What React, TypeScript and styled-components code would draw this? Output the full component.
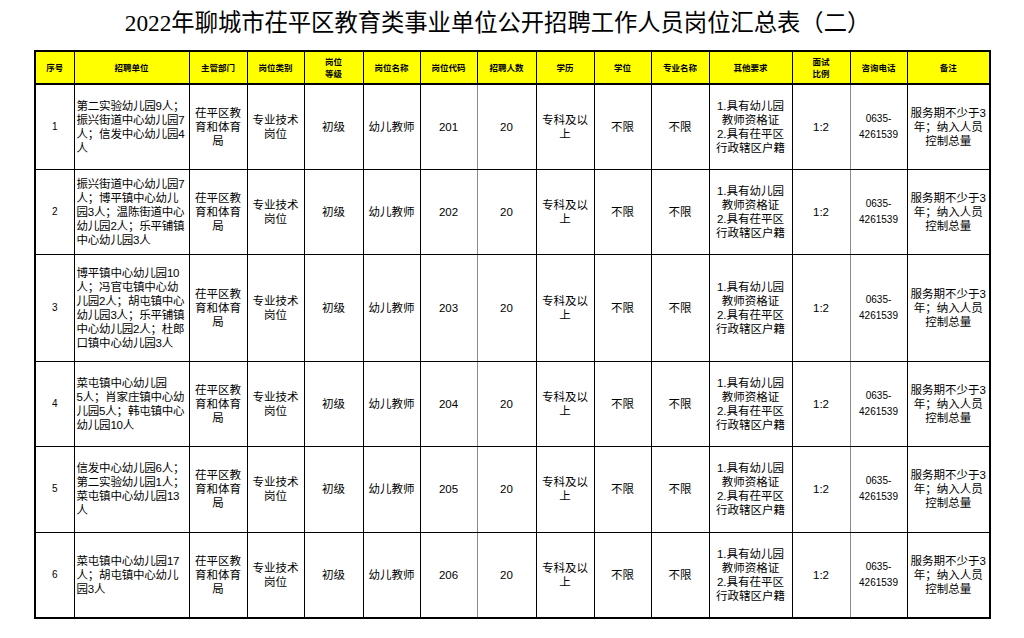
import React, { FC } from 'react';
import styled, { createGlobalStyle } from 'styled-components';

const GlobalStyle = createGlobalStyle`
  html, body {
    margin: 0;
    padding: 0;
    background: #ffffff;
  }
  body {
    font-family: "Liberation Sans", "Noto Sans CJK SC", sans-serif;
    color: #000;
  }
`;

const Page = styled.div`
  width: 1024px;
  height: 638px;
  padding-left: 34px;
  box-sizing: border-box;
`;

const Title = styled.h1`
  width: 957px;
  height: 50px;
  margin: 0;
  padding-right: 30px;
  padding-bottom: 4px;
  box-sizing: border-box;
  display: flex;
  align-items: center;
  justify-content: center;
  font-family: "Liberation Serif", "Noto Sans CJK SC", serif;
  font-weight: 400;
  font-size: 23.3px;
  line-height: 28px;
`;

const Sheet = styled.table`
  width: 957px;
  table-layout: fixed;
  border-collapse: collapse;
  border: 2px solid #000;
`;

const HeadCell = styled.th`
  background: #ffff00;
  height: 31px;
  padding: 0;
  border: 1px solid #000;
  border-bottom: 2px solid #000;
  font-size: 8.5px;
  font-weight: 700;
  line-height: 12px;
  text-align: center;
  vertical-align: middle;
  white-space: nowrap;
`;

const Cell = styled.td<{ $left?: boolean; $small?: boolean; $grey?: boolean }>`
  padding: 0 ${(p) => (p.$left ? '2px' : '0')};
  border: 1px solid #000;
  ${(p) => (p.$grey ? 'border-right-color: #8a8a8a;' : '')}
  font-size: ${(p) => (p.$small ? '10px' : '11.5px')};
  line-height: ${(p) => (p.$small ? '16px' : '14px')};
  text-align: ${(p) => (p.$left ? 'left' : 'center')};
  vertical-align: middle;
  white-space: nowrap;
  overflow: hidden;
  letter-spacing: ${(p) => (p.$left ? '-0.2px' : '0')};
`;

const Line = styled.div`
  white-space: nowrap;
`;

const Lines: FC<{ text: string[] }> = ({ text }) => (
  <>
    {text.map((t, i) => (
      <Line key={i}>{t}</Line>
    ))}
  </>
);

const widths = [39, 115, 58, 57, 59, 57, 57, 59, 58, 57, 58, 83, 58, 57, 83];

const headers: string[][] = [
  ['序号'],
  ['招聘单位'],
  ['主管部门'],
  ['岗位类别'],
  ['岗位', '等级'],
  ['岗位名称'],
  ['岗位代码'],
  ['招聘人数'],
  ['学历'],
  ['学位'],
  ['专业名称'],
  ['其他要求'],
  ['面试', '比例'],
  ['咨询电话'],
  ['备注'],
];

interface IRow {
  no: number;
  height: number;
  units: string[];
  code: string;
}

const rows: IRow[] = [
  {
    no: 1,
    height: 85,
    units: ['第二实验幼儿园9人；', '振兴街道中心幼儿园7', '人；信发中心幼儿园4', '人'],
    code: '201',
  },
  {
    no: 2,
    height: 85,
    units: ['振兴街道中心幼儿园7', '人；博平镇中心幼儿', '园3人；温陈街道中心', '幼儿园2人；乐平铺镇', '中心幼儿园3人'],
    code: '202',
  },
  {
    no: 3,
    height: 107,
    units: [
      '博平镇中心幼儿园10',
      '人；冯官屯镇中心幼',
      '儿园2人；胡屯镇中心',
      '幼儿园3人；乐平铺镇',
      '中心幼儿园2人；杜郎',
      '口镇中心幼儿园3人',
    ],
    code: '203',
  },
  {
    no: 4,
    height: 85,
    units: ['菜屯镇中心幼儿园', '5人；肖家庄镇中心幼', '儿园5人；韩屯镇中心', '幼儿园10人'],
    code: '204',
  },
  {
    no: 5,
    height: 86,
    units: ['信发中心幼儿园6人；', '第二实验幼儿园1人；', '菜屯镇中心幼儿园13', '人'],
    code: '205',
  },
  {
    no: 6,
    height: 86,
    units: ['菜屯镇中心幼儿园17', '人；胡屯镇中心幼儿', '园3人'],
    code: '206',
  },
];

const Row = styled.tr<{ $h: number }>`
  height: ${(p) => p.$h}px;
`;

const App: FC = () => {
  return (
    <>
      <GlobalStyle />
      <Page>
        <Title>2022年聊城市茌平区教育类事业单位公开招聘工作人员岗位汇总表（二）</Title>
        <Sheet>
          <colgroup>
            {widths.map((w, i) => (
              <col key={i} style={{ width: w }} />
            ))}
          </colgroup>
          <thead>
            <tr>
              {headers.map((h, i) => (
                <HeadCell key={i}>
                  <Lines text={h} />
                </HeadCell>
              ))}
            </tr>
          </thead>
          <tbody>
            {rows.map((r) => (
              <Row key={r.no} $h={r.height}>
                <Cell $small>{r.no}</Cell>
                <Cell $left>
                  <Lines text={r.units} />
                </Cell>
                <Cell>
                  <Lines text={['茌平区教', '育和体育', '局']} />
                </Cell>
                <Cell>
                  <Lines text={['专业技术', '岗位']} />
                </Cell>
                <Cell>初级</Cell>
                <Cell>幼儿教师</Cell>
                <Cell $grey>{r.code}</Cell>
                <Cell>20</Cell>
                <Cell>
                  <Lines text={['专科及以', '上']} />
                </Cell>
                <Cell>不限</Cell>
                <Cell>不限</Cell>
                <Cell>
                  <Lines text={['1.具有幼儿园', '教师资格证', '2.具有茌平区', '行政辖区户籍']} />
                </Cell>
                <Cell $grey>1:2</Cell>
                <Cell $small>
                  <Lines text={['0635-', '4261539']} />
                </Cell>
                <Cell>
                  <Lines text={['服务期不少于3', '年；纳入人员', '控制总量']} />
                </Cell>
              </Row>
            ))}
          </tbody>
        </Sheet>
      </Page>
    </>
  );
};

export default App;
